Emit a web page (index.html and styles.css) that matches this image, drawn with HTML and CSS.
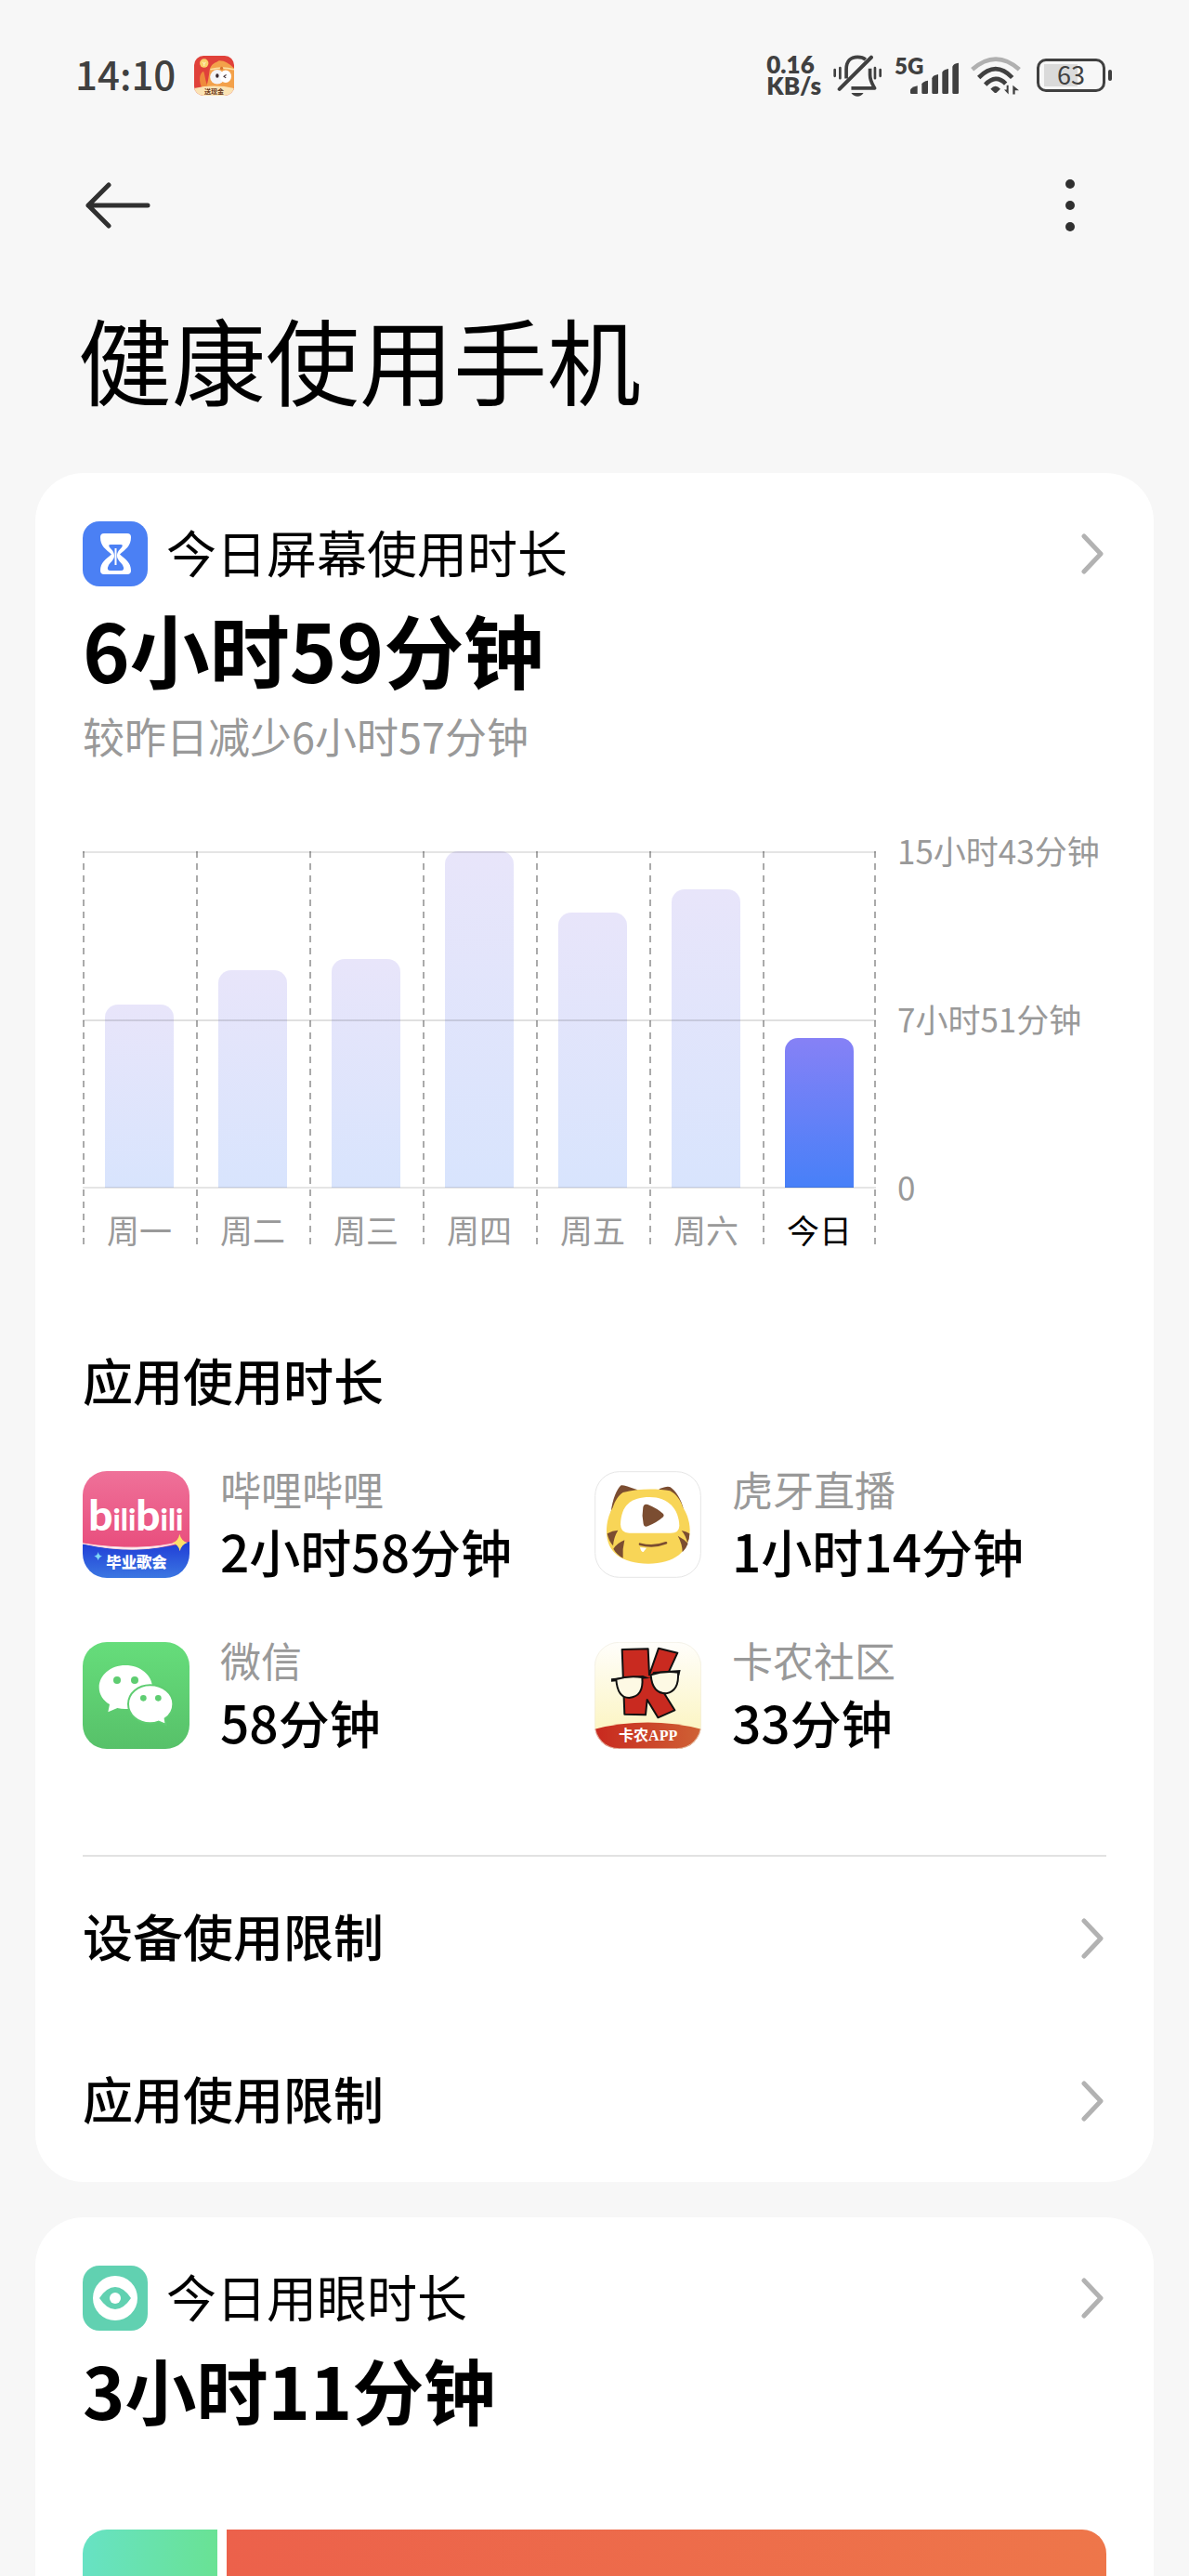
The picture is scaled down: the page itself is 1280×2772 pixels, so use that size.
FILE: index.html
```
<!DOCTYPE html>
<html lang="zh-CN">
<head>
    <meta charset="UTF-8">
    <meta name="viewport" content="width=device-width, initial-scale=1.0">
    <title>健康使用手机</title>
    <link rel="stylesheet" href="styles.css">
</head>
<body>

<div class="status-bar">
    <span class="clock">14:10</span>
    <svg class="notice-icon" viewBox="0 0 128 128">
        <defs>
            <clipPath id="noticeClip"><rect width="128" height="128" rx="30"/></clipPath>
        </defs>
        <g clip-path="url(#noticeClip)">
            <rect width="128" height="128" fill="#e0413a"/>
            <path d="M50 44C54 24 70 22 78 16C94 14 112 24 128 40V110H32C44 96 46 70 50 44Z" fill="#f3a14a"/>
            <path d="M30 50C16 56 14 84 26 104L46 102C36 86 36 66 30 50Z" fill="#ee8a3c"/>
            <path d="M52 44Q90 34 128 44" stroke="#fbe0a0" stroke-width="5" fill="none"/>
            <circle cx="88" cy="40" r="5" fill="#d8742c"/>
            <circle cx="32" cy="24" r="14" fill="#f9d26a"/>
            <path d="M27 20L32 26L37 20M32 26V33" stroke="#fff3c4" stroke-width="3" fill="none"/>
            <ellipse cx="74" cy="68" rx="23" ry="23" fill="#f4f4f6"/>
            <ellipse cx="101" cy="66" rx="18" ry="20" fill="#fff"/>
            <ellipse cx="74" cy="64" rx="5" ry="7" fill="#3a2a30"/>
            <path d="M103 61L95 66L102 71" stroke="#3a2a30" stroke-width="3" fill="none"/>
            <path d="M0 104Q64 90 128 104V128H0Z" fill="#fbe3b4"/>
            <text x="64" y="121" class="notice-text">送现金</text>
        </g>
    </svg>

    <div class="status-right">
        <div class="net-speed">
            <div>0.16</div>
            <div>KB/s</div>
        </div>
        <svg width="53" height="45" viewBox="0 0 158 134" fill="none" stroke="#404040" stroke-linecap="round">
            <path d="M42 76V46C42 20 56 7 78 7C90 7 98 10 104 15" stroke-width="11" stroke-linecap="butt"/>
            <path d="M118 44V64C118 84 126 94 133 107H58" stroke-width="11" stroke-linecap="butt" stroke-linejoin="round"/>
            <path d="M20 110L122 8" stroke-width="12"/>
            <path d="M58 122H97C92 130 86 133 78 133S63 130 58 122Z" fill="#404040" stroke="none"/>
            <path d="M5 48V68M22 42V75M134 42V75M151 48V68" stroke-width="8"/>
        </svg>
        <div class="mobile">
            <span class="net-type">5G</span>
            <svg width="52" height="34" viewBox="0 0 156 102" fill="#404040">
                <path d="M0 90Q0 82 23 76V102H4Q0 102 0 98Z"/>
                <path d="M37 70Q40 62 57 59V98Q57 102 53 102H41Q37 102 37 98Z"/>
                <path d="M70 52Q72 42 90 39V98Q90 102 86 102H74Q70 102 70 98Z"/>
                <path d="M103 32Q106 24 123 21V98Q123 102 119 102H107Q103 102 103 98Z"/>
                <path d="M136 14Q139 4 156 2V98Q156 102 152 102H140Q136 102 136 98Z"/>
            </svg>
        </div>
        <svg width="54" height="41" viewBox="0 0 162 122" fill="none" stroke="#404040" stroke-width="14">
            <path d="M5 41Q81 -26 157 41" stroke="#b0b0b0"/>
            <path d="M26 67Q81 11 134 67"/>
            <path d="M47 90Q81 54 113 87"/>
            <path d="M64 104Q80 86 96 104L84 115Q80 118 76 115Z" fill="#404040" stroke="none"/>
            <path d="M122 92V121L108 106H116V92ZM136 121V92L156 108H143V121Z" fill="#404040" stroke="none"/>
        </svg>
        <div class="battery"><span>63</span></div>
    </div>
</div>

<div class="nav">
    <button class="nav-btn" aria-label="返回">
        <svg width="70" height="50" viewBox="0 0 70 50" fill="none" stroke="#303030" stroke-width="5" stroke-linecap="round" stroke-linejoin="round">
            <path d="M67 25H3M25 3L3 25L25 47"/>
        </svg>
    </button>
    <button class="nav-btn" aria-label="更多">
        <svg width="10" height="56" viewBox="0 0 10 56" fill="#303030">
            <circle cx="5" cy="5" r="5"/>
            <circle cx="5" cy="28" r="5"/>
            <circle cx="5" cy="51" r="5"/>
        </svg>
    </button>
</div>

<h1>健康使用手机</h1>

<main>
    <section class="card">
        <a href="#screen" class="card-head">
            <svg class="head-icon" viewBox="0 0 70 70">
                <rect width="70" height="70" rx="18" fill="#4b80f4"/>
                <path d="M23 13H48Q52 13 52 17C52 27 46 30 40 35.500C46 41 52 44 52 53Q52 57 48 57H23Q19 57 19 53C19 44 25 41 31 35.500C25 30 19 27 19 17Q19 13 23 13Z" fill="#fff"/>
                <path d="M30 25H41Q44 25 42 28C38 32 37 34 37 37C37 41 40 43 43 47Q46 53 41 53H30Q25 53 28 47C31 43 34 41 34 37C34 34 33 32 29 28Q27 25 30 25Z" fill="#4b80f4"/>
                <path d="M35.500 29V47" stroke="#fff" stroke-width="2"/>
            </svg>
            <h2>今日屏幕使用时长</h2>
            <svg class="chevron" viewBox="0 0 24 44"><path d="M3 3L21 22L3 41"/></svg>
        </a>
        <div class="total">6小时59分钟</div>
        <div class="compare">较昨日减少6小时57分钟</div>

        <div class="chart">
            <div class="plot">
                <div class="day"><div class="slot"><div class="bar" style="height: 54.4%"></div></div><span>周一</span></div>
                <div class="day"><div class="slot"><div class="bar" style="height: 64.6%"></div></div><span>周二</span></div>
                <div class="day"><div class="slot"><div class="bar" style="height: 68%"></div></div><span>周三</span></div>
                <div class="day"><div class="slot"><div class="bar" style="height: 100%"></div></div><span>周四</span></div>
                <div class="day"><div class="slot"><div class="bar" style="height: 81.8%"></div></div><span>周五</span></div>
                <div class="day"><div class="slot"><div class="bar" style="height: 88.6%"></div></div><span>周六</span></div>
                <div class="day today"><div class="slot"><div class="bar" style="height: 44.4%"></div></div><span>今日</span></div>
            </div>
            <div class="scale">
                <span>15小时43分钟</span>
                <span>7小时51分钟</span>
                <span>0</span>
            </div>
        </div>

        <h2 class="apps-title">应用使用时长</h2>
        <div class="apps">
            <div class="app">
                <svg class="app-icon" viewBox="0 0 345 345">
                    <defs>
                        <clipPath id="appClip"><rect width="345" height="345" rx="78"/></clipPath>
                        <linearGradient id="pink" x2="0" y2="1"><stop stop-color="#ef7199"/><stop offset="1" stop-color="#e84c7c"/></linearGradient>
                        <linearGradient id="blue" x2="0" y2="1"><stop stop-color="#1f3bd6"/><stop offset="1" stop-color="#3b77e2"/></linearGradient>
                    </defs>
                    <g clip-path="url(#appClip)">
                        <rect width="345" height="260" fill="url(#pink)"/>
                        <path d="M0 234Q170 274 345 228V345H0Z" fill="url(#blue)"/>
                        <path d="M0 234Q180 274 318 228Q190 262 0 234Z" fill="#fff" stroke="#fbd9dc" stroke-width="3"/>
                        <path d="M313 203Q318 226 339 231Q319 236 314 259Q309 236 289 232Q309 226 313 203Z" fill="#fde06a"/>
                        <path d="M50 261Q52 273 63 275Q52 277 50 289Q48 277 37 275Q48 273 50 261Z" fill="#7fd8f5"/>
                        <text x="172" y="193" class="bili-logo"><tspan class="bili-b">b</tspan>ili<tspan class="bili-b">b</tspan>ili</text>
                        <text x="174" y="311" class="bili-sub">毕业歌会</text>
                    </g>
                </svg>
                <div class="app-info">
                    <div class="app-name">哔哩哔哩</div>
                    <div class="app-time">2小时58分钟</div>
                </div>
            </div>
            <div class="app">
                <svg class="app-icon" viewBox="0 0 345 345">
                    <rect x="2" y="2" width="341" height="341" rx="78" fill="#fff" stroke="#e6e6e6" stroke-width="3"/>
                    <path d="M53 134C58 90 72 58 86 46Q92 43 140 61L110 84ZM208 58Q236 46 245 52C262 64 280 90 288 124L240 90Z" fill="#7b4d31"/>
                    <path d="M59 118C66 96 78 78 92 69C140 56 204 56 244 64C264 74 278 94 285 116C296 132 308 160 308 190C308 262 256 299 174 299C88 299 39 262 39 196C39 166 46 140 59 118Z" fill="#f8d557"/>
                    <path d="M41 202Q58 192 76 191Q62 214 60 241Q46 226 41 202ZM61 251Q74 232 97 223Q90 250 92 281Q72 270 61 251ZM307 202Q296 194 281 192Q296 210 300 232Q307 220 307 202ZM269 209Q290 220 302 234Q296 250 284 262Q284 236 269 209Z" fill="#7b4d31"/>
                    <path d="M84 172C86 110 118 84 178 84C238 84 272 122 274 176Q274 200 246 200H112Q84 200 84 172Z" fill="#fff"/>
                    <path d="M157 116Q160 104 172 108Q202 120 222 138Q226 143 222 148Q202 166 172 178Q160 182 158 170Q152 143 157 116Z" fill="#7b4d31"/>
                    <path d="M147 236Q190 248 231 232" stroke="#7b4d31" stroke-width="8" fill="none" stroke-linecap="round"/>
                    <path d="M147 246L168 248L158 261Q150 262 147 246Z" fill="#fff"/>
                </svg>
                <div class="app-info">
                    <div class="app-name">虎牙直播</div>
                    <div class="app-time">1小时14分钟</div>
                </div>
            </div>
            <div class="app">
                <svg class="app-icon" viewBox="0 0 345 345">
                    <defs>
                        <linearGradient id="green" x2="0" y2="1"><stop stop-color="#66dd7b"/><stop offset="1" stop-color="#57c169"/></linearGradient>
                    </defs>
                    <rect width="345" height="345" rx="78" fill="url(#green)"/>
                    <path d="M138 75C186 75 225 107 225 146S186 216 138 216Q124 216 112 213L82 226L87 201C66 189 53 169 53 146C53 107 90 75 138 75Z" fill="#fff"/>
                    <path d="M218 139C260 139 292 166 292 200C292 219 282 236 266 247L269 267L245 257Q232 262 218 262C178 262 147 234 147 200S178 139 218 139Z" fill="#fff" stroke="#5ecd71" stroke-width="6"/>
                    <g fill="#5ecd71">
                        <circle cx="111" cy="123" r="12"/>
                        <circle cx="168" cy="123" r="12"/>
                        <circle cx="196" cy="181" r="10"/>
                        <circle cx="244" cy="181" r="10"/>
                    </g>
                </svg>
                <div class="app-info">
                    <div class="app-name">微信</div>
                    <div class="app-time">58分钟</div>
                </div>
            </div>
            <div class="app">
                <svg class="app-icon" viewBox="0 0 345 345">
                    <defs>
                        <linearGradient id="cream" x2="0" y2="1"><stop stop-color="#fffefb"/><stop offset="1" stop-color="#fbf3b8"/></linearGradient>
                        <linearGradient id="brick" x2="1" y2="0"><stop stop-color="#c8281e"/><stop offset="1" stop-color="#cf6235"/></linearGradient>
                    </defs>
                    <g clip-path="url(#appClip)">
                        <rect width="345" height="345" fill="url(#cream)"/>
                        <path d="M89 24L173 22L177 106L207 20L268 35L238 100L204 132L259 220L205 244L170 186L165 235L97 233Z" fill="#c92a20" stroke="#111" stroke-width="6" stroke-linejoin="round"/>
                        <path d="M54 118L156 108L178 116L190 96L278 90L274 108L54 128Z" fill="#111"/>
                        <path d="M70 120Q110 108 154 114Q160 176 112 180Q74 180 70 120ZM182 106Q224 92 270 98Q274 158 232 166Q186 166 182 106Z" fill="#fdf9e4" stroke="#111" stroke-width="6"/>
                        <path d="M0 281Q172 238 345 281V345H0Z" fill="url(#brick)"/>
                        <text x="173" y="317" class="kanong-text">卡农APP</text>
                    </g>
                    <rect x="1" y="1" width="343" height="343" rx="78" fill="none" stroke="#eeece0" stroke-width="2"/>
                </svg>
                <div class="app-info">
                    <div class="app-name">卡农社区</div>
                    <div class="app-time">33分钟</div>
                </div>
            </div>
        </div>

        <div class="links">
            <a href="#device-limit" class="link-row">
                <span>设备使用限制</span>
                <svg class="chevron" viewBox="0 0 24 44"><path d="M3 3L21 22L3 41"/></svg>
            </a>
            <a href="#app-limit" class="link-row">
                <span>应用使用限制</span>
                <svg class="chevron" viewBox="0 0 24 44"><path d="M3 3L21 22L3 41"/></svg>
            </a>
        </div>
    </section>

    <section class="card eye-card">
        <a href="#eye" class="card-head">
            <svg class="head-icon" viewBox="0 0 70 70">
                <rect width="70" height="70" rx="18" fill="#61d1b1"/>
                <circle cx="35" cy="35" r="24" fill="#fff"/>
                <path d="M18 35Q26 23 35 23T52 35Q44 47 35 47T18 35Z" fill="#61d1b1"/>
                <circle cx="35" cy="35" r="6" fill="#fff"/>
            </svg>
            <h2>今日用眼时长</h2>
            <svg class="chevron" viewBox="0 0 24 44"><path d="M3 3L21 22L3 41"/></svg>
        </a>
        <div class="total eye-total">3小时11分钟</div>
        <div class="eye-bar">
            <div class="eye-good"></div>
            <div class="eye-bad"></div>
        </div>
    </section>
</main>

</body>
</html>
```
FILE: styles.css
```
* {
    box-sizing: border-box;
}

body {
    display: flex;
    flex-direction: column;
    min-height: 100vh;
    margin: 0;
    font-family: "Noto Sans CJK SC", sans-serif;
    background: #f7f7f7;
    color: #000;
}

h1, h2 {
    margin: 0;
}

svg {
    display: block;
    flex-shrink: 0;
}

a {
    color: inherit;
    text-decoration: none;
}


/* status bar */
.status-bar {
    display: flex;
    align-items: center;
    height: 162px;
    padding: 0 83px 0 81px;
    color: #404040;
}

.clock {
    font-size: 42px;
    font-weight: 500;
    line-height: 56px;
    margin-bottom: 4px;
}

.notice-icon {
    width: 43px;
    height: 43px;
    margin-left: 20px;
}

.notice-text {
    font-size: 21px;
    font-weight: 700;
    fill: #6b3a1e;
    text-anchor: middle;
}

.status-right {
    display: flex;
    align-items: center;
    gap: 13px;
    margin-left: auto;
}

.net-speed {
    font-family: Lato, sans-serif;
    font-size: 26px;
    font-weight: 800;
    line-height: 23px;
}

.mobile {
    position: relative;
    display: flex;
    align-items: flex-end;
    width: 69px;
    height: 40px;
    padding-left: 17px;
}

.net-type {
    position: absolute;
    left: 0;
    top: 0;
    font-family: Lato, sans-serif;
    font-size: 24px;
    font-weight: 800;
    line-height: 20px;
}

.battery {
    position: relative;
    width: 74px;
    height: 36px;
    margin: 0 7px 0 4px;
    border: 3px solid #404040;
    border-radius: 10px;
    background: linear-gradient(#dadada, #dadada) 5px 3px / 36px 24px no-repeat;
    font-size: 27px;
    line-height: 28px;
    text-align: center;
}

.battery::after {
    content: "";
    position: absolute;
    right: -10px;
    top: 9px;
    width: 4px;
    height: 12px;
    border-radius: 2px;
    background: #404040;
}


/* nav + title */
.nav {
    display: flex;
    justify-content: space-between;
    align-items: center;
    height: 117px;
    padding: 0 123px 0 92px;
}

.nav-btn {
    padding: 0;
    border: none;
    background: none;
    cursor: pointer;
}

h1 {
    padding: 46px 84px 64px;
    font-size: 101px;
    font-weight: 400;
    line-height: 120px;
}


/* cards */
main {
    flex: 1;
    display: flex;
    flex-direction: column;
    gap: 38px;
    padding: 0 38px;
}

.card {
    padding: 52px 51px 0;
    border-radius: 52px;
    background: #fff;
}

.card-head {
    display: flex;
    height: 70px;
}

.card-head .chevron {
    align-self: center;
}

.head-icon {
    width: 70px;
    height: 70px;
    margin-right: 20px;
}

h2 {
    font-size: 54px;
    font-weight: 500;
    line-height: 66px;
}

.card-head h2 {
    font-weight: 400;
}

.chevron {
    width: 24px;
    height: 44px;
    margin-left: auto;
    margin-right: 3px;
    fill: none;
    stroke: #b2b2b2;
    stroke-width: 5;
    stroke-linecap: round;
    stroke-linejoin: round;
}

.total {
    margin-top: 17px;
    font-size: 86px;
    font-weight: 700;
    line-height: 100px;
}

.compare {
    margin-top: 14px;
    font-size: 45px;
    line-height: 60px;
    color: #999;
}


/* week chart */
.chart {
    display: flex;
    margin-top: 94px;
    font-size: 35px;
    line-height: 44px;
    color: #999;
}

.plot {
    position: relative;
    flex: 1;
    display: flex;
}

/* horizontal lines, drawn over the bars */
.plot::before {
    content: "";
    position: absolute;
    box-sizing: border-box;
    left: 0;
    right: 0;
    top: 0;
    height: 363px;
    border-top: 2px solid rgba(0, 0, 0, 0.1);
    border-bottom: 2px solid rgba(0, 0, 0, 0.1);
    background: linear-gradient(rgba(0, 0, 0, 0.12), rgba(0, 0, 0, 0.12)) center / 100% 2px no-repeat;
}

.day {
    flex: 1;
    text-align: center;
    background: repeating-linear-gradient(#aaa 0 7px, transparent 7px 13px) left top / 2px 100% no-repeat;
}

.day:last-child {
    background: repeating-linear-gradient(#aaa 0 7px, transparent 7px 13px) left top / 2px 100% no-repeat,
        repeating-linear-gradient(#aaa 0 7px, transparent 7px 13px) right top / 2px 100% no-repeat;
}

.slot {
    display: flex;
    align-items: flex-end;
    height: 362px;
    margin-bottom: 23px;
    padding: 0 24px;
}

.bar {
    width: 100%;
    border-radius: 14px 14px 0 0;
    background: linear-gradient(#e8e5fa, #d8e4fd);
}

.today {
    color: #000;
}

.today .bar {
    background: linear-gradient(#8681f6, #4780f8);
}

.scale {
    display: flex;
    flex-direction: column;
    justify-content: space-between;
    width: 248px;
    height: 406px;
    margin-top: -23px;
    padding-left: 23px;
    white-space: nowrap;
}


/* app list */
.apps-title {
    margin-top: 107px;
}

.apps {
    display: grid;
    grid-template-columns: 1fr 1fr;
    row-gap: 52px;
    margin-top: 56px;
}

.app {
    display: flex;
    align-items: center;
    gap: 33px;
}

.app-icon {
    width: 115px;
    height: 115px;
}

.app-name {
    font-size: 44px;
    line-height: 56px;
    color: #999;
}

.app-time {
    font-size: 55px;
    font-weight: 500;
    line-height: 76px;
}

.bili-logo {
    font-family: Lato, sans-serif;
    font-size: 96px;
    font-weight: 900;
    fill: #fff;
    text-anchor: middle;
}

.bili-b {
    font-size: 138px;
}

.bili-sub {
    font-size: 49px;
    font-weight: 900;
    fill: #fff;
    text-anchor: middle;
}

.kanong-text {
    font-family: "Liberation Serif", "Noto Sans CJK SC", serif;
    font-size: 48px;
    font-weight: 700;
    fill: #fff;
    text-anchor: middle;
}

.links {
    margin-top: 106px;
    border-top: 2px solid #e2e2e2;
}

.link-row {
    display: flex;
    align-items: center;
    height: 175px;
    font-size: 54px;
    font-weight: 500;
}

.link-row span {
    margin-bottom: 6px;
}


/* eye usage */
.eye-card {
    flex: 1;
    display: flex;
    flex-direction: column;
    border-radius: 52px 52px 0 0;
}

.eye-total {
    margin-top: 13px;
    font-size: 77px;
}

.eye-bar {
    flex: 1;
    display: flex;
    gap: 10px;
    min-height: 48px;
    margin-top: 101px;
    border-radius: 26px 26px 0 0;
    overflow: hidden;
}

.eye-good {
    width: 145px;
    background: linear-gradient(to right, #67e2c4, #69e294);
}

.eye-bad {
    flex: 1;
    background: linear-gradient(to right, #ec614b, #ee764a);
}
```
